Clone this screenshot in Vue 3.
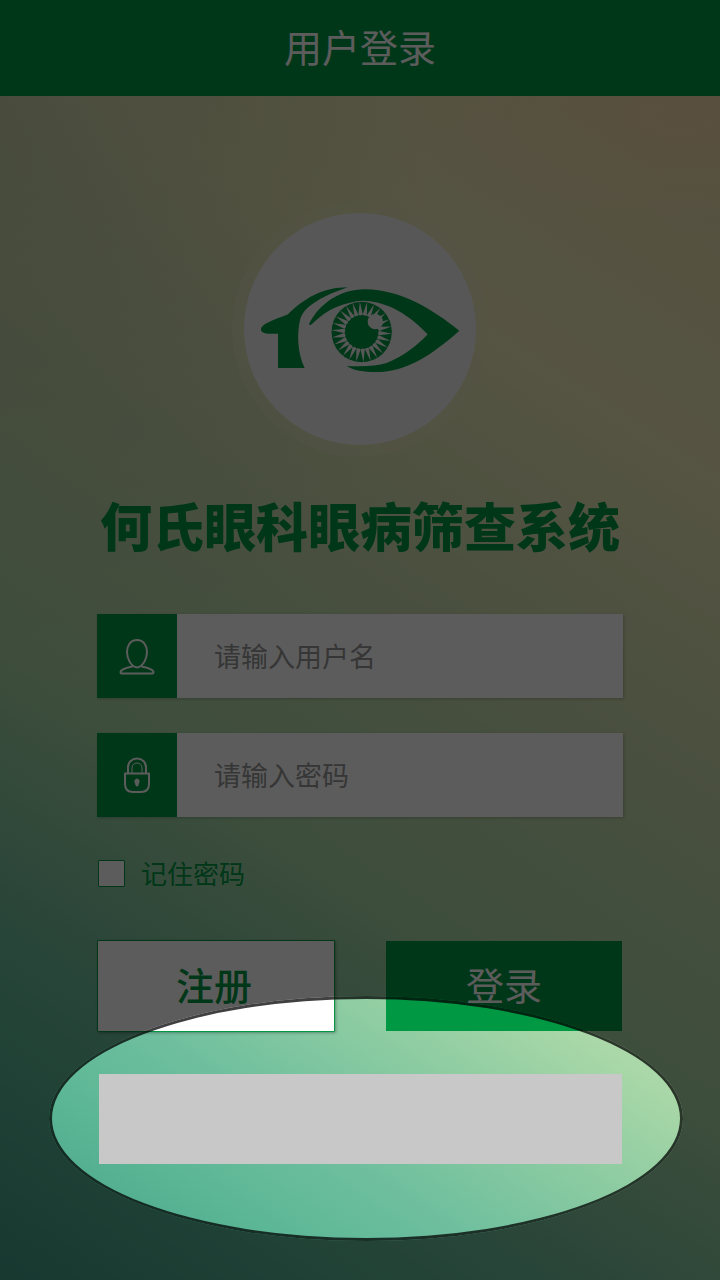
<script setup>
import { ref } from 'vue'

const username = ref('')
const password = ref('')
const remember = ref(false)

const rayCount = 26
const rays = Array.from({ length: rayCount }, (_, i) => {
  const step = (Math.PI * 2) / rayCount
  const angle = i * step + step / 4
  const point = (r, a) =>
    `${(425 + r * Math.cos(a)).toFixed(1)},${(426 + r * Math.sin(a)).toFixed(1)}`
  return [
    point(53, angle - step * 0.5),
    point(91, angle),
    point(53, angle + step * 0.5),
    point(46, angle),
  ].join(' ')
})
</script>

<template>
  <div class="page">
    <header class="bar">
      <h1>用户登录</h1>
    </header>

    <main class="content">
      <div class="logo">
        <svg viewBox="72 69 696 696" role="img" aria-label="何氏眼科">
          <path
            class="ink"
            d="M383 292C310 292 252 325 204 373C178 384 130 398 123 416C121 430 140 433 174 431V534H254C232 488 230 430 241 386C256 344 318 314 383 292Z"
          />
          <path
            class="ink"
            d="M267 402C298 342 358 298 435 298C545 299 640 360 718 422C636 494 560 546 470 546C430 546 402 542 380 528C430 530 468 529 500 519C550 500 592 466 623 433C572 378 505 334 430 332C370 337 322 355 275 403Q268 407 267 402Z"
          />
          <circle class="iris" cx="425" cy="426" r="92" />
          <polygon v-for="ray in rays" :key="ray" class="light" :points="ray" />
          <circle class="ink" cx="425" cy="426" r="50" />
          <circle class="light" cx="466" cy="395" r="23" />
        </svg>
      </div>

      <h2 class="title">何氏眼科眼病筛查系统</h2>

      <form class="form" @submit.prevent>
        <div class="field">
          <label for="username" aria-label="用户名">
            <svg viewBox="0 0 40 40" aria-hidden="true">
              <path
                d="M20 4C13.500 4 10 9.500 10 16C10 22 13.500 30.500 20 31.500C26.500 30.500 30 22 30 16C30 9.500 26.500 4 20 4ZM15.500 30.500C10 31.500 4 33.500 3.500 36C3.500 37.500 4 37.500 5 37.500H35C36 37.500 36.500 37.500 36.500 36C36 33.500 30 31.500 24.500 30.500"
              />
            </svg>
          </label>
          <input id="username" v-model="username" type="text" placeholder="请输入用户名" />
        </div>

        <div class="field">
          <label for="password" aria-label="密码">
            <svg viewBox="0 0 40 40" aria-hidden="true">
              <path
                d="M8 18.500H32V29C32 34 29 37 24 37H16C11 37 8 34 8 29ZM11 18V12.500C11 7 15 3.500 20 3.500S29 7 29 12.500V18"
              />
              <path class="fine" d="M15 18V13C15 10 17 8 20 8S25 10 25 13V18" />
              <path class="solid" d="M20 24A2.200 2.200 0 0 1 22 27L20.700 31H19.300L18 27A2.200 2.200 0 0 1 20 24Z" />
            </svg>
          </label>
          <input id="password" v-model="password" type="password" placeholder="请输入密码" />
        </div>

        <label class="remember">
          <input v-model="remember" type="checkbox" />
          <span>记住密码</span>
        </label>

        <div class="actions">
          <button class="register" type="button">注册</button>
          <button class="login" type="submit">登录</button>
        </div>
      </form>

      <div class="highlight">
        <div class="panel"></div>
        <div class="spotlight"></div>
      </div>
    </main>
  </div>
</template>

<style>
body {
  margin: 0;
}
</style>

<style scoped>
.page {
  --green: #009843;
  position: relative;
  box-sizing: border-box;
  min-height: 100vh;
  overflow: hidden;
  font-family: "Noto Sans CJK SC", sans-serif;
  background:
    radial-gradient(ellipse 60% 50% at 0% 10%, rgba(180, 195, 160, 0.55), rgba(180, 195, 160, 0)),
    radial-gradient(ellipse 40% 10% at 95% 9%, rgba(252, 218, 174, 0.7), rgba(252, 218, 174, 0)),
    linear-gradient(33deg, #409c85 0%, #5cb796 13%, #6fbf9e 20%, #90cda2 29%, #abd8a8 36%, #cbdcae 54%, #ede8b6 72%, #e6dcac 100%);
}

.bar {
  display: flex;
  align-items: center;
  justify-content: center;
  height: 96px;
  background: var(--green);
}

h1 {
  margin: 0 0 4px;
  color: #fff;
  font-size: 38px;
  font-weight: 400;
  line-height: 56px;
}

.content {
  padding: 105px 97px 116px;
}

.logo {
  box-sizing: border-box;
  width: 256px;
  height: 256px;
  margin: 0 auto;
  padding: 12px;
  border-radius: 50%;
  background: rgba(232, 232, 196, 0.35);
}

.logo svg {
  display: block;
  border-radius: 50%;
  background: #f2f2f2;
}

.ink {
  fill: var(--green);
}

.light {
  fill: #f2f2f2;
}

.iris {
  fill: var(--green);
  stroke: #f2f2f2;
  stroke-width: 3;
}

.title {
  margin: 38px 0 59px;
  color: var(--green);
  font-size: 52px;
  font-weight: 900;
  line-height: 60px;
  text-align: center;
  white-space: nowrap;
}

.field {
  display: flex;
  height: 84px;
  margin-bottom: 35px;
  background: #fff;
  box-shadow: 1px 1px 3px rgba(0, 0, 0, 0.2);
}

.field label {
  display: flex;
  align-items: center;
  justify-content: center;
  width: 80px;
  background: var(--green);
}

.field svg {
  width: 40px;
  height: 40px;
  fill: none;
  stroke: #fff;
  stroke-width: 2;
  stroke-linejoin: round;
}

.field .fine {
  stroke-width: 1;
}

.field .solid {
  fill: #fff;
  stroke-width: 1;
}

.field input {
  flex: 1;
  min-width: 0;
  padding: 0 37px 2px;
  border: 0;
  outline: 0;
  background: transparent;
  color: #555;
  font-family: inherit;
  font-size: 27px;
  font-weight: 400;
}

.field input::placeholder {
  color: #959595;
  opacity: 1;
}

.remember {
  display: flex;
  align-items: center;
  gap: 16px;
  width: max-content;
  margin-top: 42px;
  padding-left: 1px;
  color: var(--green);
  font-size: 26px;
  font-weight: 400;
  line-height: 28px;
}

.remember input {
  appearance: none;
  width: 27px;
  height: 27px;
  margin: 0;
  border: 1px solid var(--green);
  border-radius: 1px;
  background: #fff;
}

.remember input:checked {
  box-shadow: inset 0 0 0 6px #fff;
  background: var(--green);
}

.actions {
  display: grid;
  grid-template-columns: 1fr 1fr;
  gap: 50px;
  margin-top: 53px;
}

.actions button {
  height: 92px;
  padding: 0 4px 6px 0;
  border: 1px solid var(--green);
  border-radius: 1px;
  font-family: inherit;
  font-size: 38px;
}

.actions .register {
  background: #fff;
  color: var(--green);
  font-weight: 500;
  box-shadow: 1px 1px 3px rgba(0, 0, 0, 0.3);
}

.actions .login {
  height: 90px;
  margin: 1px;
  padding: 0 0 6px;
  border: 0;
  border-radius: 0;
  background: var(--green);
  color: #fff;
  font-weight: 400;
}

.highlight {
  position: relative;
  margin-top: 42px;
}

.panel {
  height: 90px;
  margin: 0 1px 0 2px;
  background: #c8c8c8;
}

/* Elliptical window in the dimmed guide layer */
.spotlight {
  position: absolute;
  inset: -78px -60px -77px -48px;
  border: 3px solid rgba(0, 0, 0, 0.75);
  border-radius: 50%;
  box-shadow: 0 0 0 2000px rgba(0, 0, 0, 0.64);
  pointer-events: none;
}
</style>
